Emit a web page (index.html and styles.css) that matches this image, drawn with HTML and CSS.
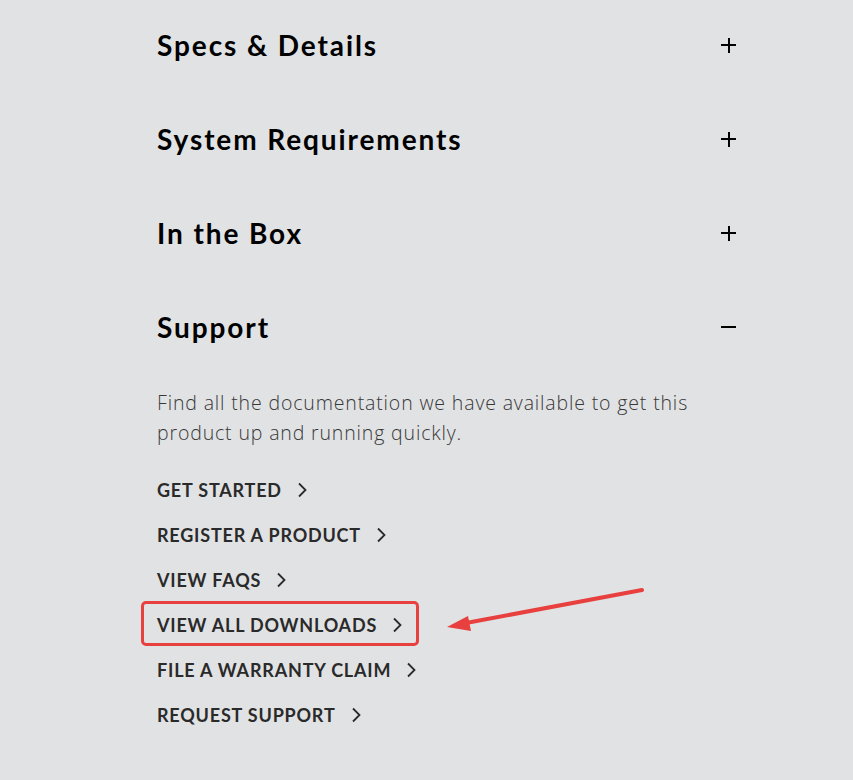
FILE: index.html
```
<!DOCTYPE html>
<html lang="en">
<head>
<meta charset="utf-8">
<link rel="stylesheet" href="styles.css">
</head>
<body>
<main class="panel">
  <section class="acc">
    <div class="acc-head"><h2>Specs &amp; Details</h2><span class="toggle plus"></span></div>
  </section>
  <section class="acc">
    <div class="acc-head"><h2>System Requirements</h2><span class="toggle plus"></span></div>
  </section>
  <section class="acc">
    <div class="acc-head"><h2>In the Box</h2><span class="toggle plus"></span></div>
  </section>
  <section class="acc open">
    <div class="acc-head"><h2>Support</h2><span class="toggle minus"></span></div>
    <div class="acc-body">
      <p class="intro">Find all the documentation we have available to get this product up and running quickly.</p>
      <ul class="links">
        <li><a class="link">GET STARTED<svg class="chev" viewBox="0 0 10 16"><path d="M1.5 1.5 L8 8 L1.5 14.5"/></svg></a></li>
        <li><a class="link">REGISTER A PRODUCT<svg class="chev" viewBox="0 0 10 16"><path d="M1.5 1.5 L8 8 L1.5 14.5"/></svg></a></li>
        <li><a class="link">VIEW FAQS<svg class="chev" viewBox="0 0 10 16"><path d="M1.5 1.5 L8 8 L1.5 14.5"/></svg></a></li>
        <li class="highlighted"><a class="link">VIEW ALL DOWNLOADS<svg class="chev" viewBox="0 0 10 16"><path d="M1.5 1.5 L8 8 L1.5 14.5"/></svg></a>
          <svg class="arrow" viewBox="0 0 210 50"><path class="shaft" d="M200 4 L24 37"/><path class="head" d="M5 41 L26 30 L29 45 Z"/></svg>
        </li>
        <li><a class="link">FILE A WARRANTY CLAIM<svg class="chev" viewBox="0 0 10 16"><path d="M1.5 1.5 L8 8 L1.5 14.5"/></svg></a></li>
        <li><a class="link">REQUEST SUPPORT<svg class="chev" viewBox="0 0 10 16"><path d="M1.5 1.5 L8 8 L1.5 14.5"/></svg></a></li>
      </ul>
    </div>
  </section>
</main>
</body>
</html>
```
FILE: styles.css
```
html, body {
  margin: 0;
  padding: 0;
  background: #e1e2e4;
}
body {
  font-family: Lato, "Noto Sans", sans-serif;
  color: #000;
  height: 780px;
  overflow: hidden;
}
.panel {
  width: 580px;
  margin-left: 157px;
  margin-top: -2px;
  display: flex;
  flex-direction: column;
}
.acc-head {
  height: 94px;
  display: flex;
  align-items: center;
  justify-content: space-between;
}
.acc-head h2 {
  margin: 0;
  font-size: 28px;
  font-weight: 700;
  letter-spacing: 1.9px;
  line-height: 1;
}
.toggle {
  position: relative;
  width: 15px;
  height: 15px;
  margin-right: 1px;
}
.toggle::before, .plus::after {
  content: "";
  position: absolute;
  background: #000;
}
.toggle::before {
  left: 0;
  top: 6.5px;
  width: 15px;
  height: 2px;
}
.plus::after {
  left: 6.5px;
  top: 0;
  width: 2px;
  height: 15px;
}
.acc-body {
  padding-top: 14px;
}
.intro {
  margin: 0;
  font-family: "Open Sans", Lato, sans-serif;
  font-size: 19.5px;
  font-weight: 300;
  line-height: 30px;
  letter-spacing: 0.85px;
  color: #383838;
  width: 565px;
}
.links {
  list-style: none;
  margin: 19px 0 0;
  padding: 0;
}
.links li {
  height: 45px;
  display: flex;
  align-items: center;
  position: relative;
}
.link {
  display: inline-flex;
  align-items: center;
  gap: 15px;
  font-size: 18px;
  font-weight: 700;
  color: #2a2a2a;
  letter-spacing: 0.8px;
}
.chev {
  width: 11px;
  height: 16px;
}
.chev path {
  fill: none;
  stroke: #2a2a2a;
  stroke-width: 1.8;
}
.highlighted::before {
  content: "";
  position: absolute;
  box-sizing: border-box;
  left: -16px;
  top: -1px;
  width: 278px;
  height: 45px;
  border: 3px solid #e8403f;
  border-radius: 5px;
}
.arrow {
  position: absolute;
  left: 285px;
  top: -16px;
  width: 210px;
  height: 50px;
  overflow: visible;
}
.arrow .shaft {
  stroke: #e8403f;
  stroke-width: 4;
  stroke-linecap: round;
}
.arrow .head {
  fill: #e8403f;
}
```
